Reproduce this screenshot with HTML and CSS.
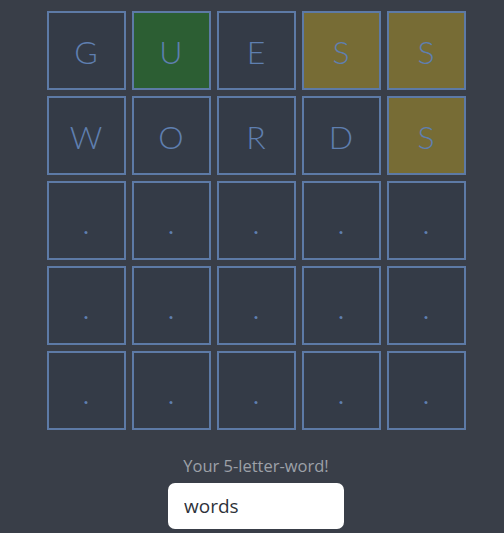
FILE: index.html
```html
<!DOCTYPE html>
<html>
<head>
<meta charset="utf-8">
<link rel="stylesheet" href="styles.css">
</head>
<body>
<main class="game">
  <div class="board">
    <div class="tile">G</div>
    <div class="tile correct">U</div>
    <div class="tile">E</div>
    <div class="tile present">S</div>
    <div class="tile present">S</div>

    <div class="tile">W</div>
    <div class="tile">O</div>
    <div class="tile">R</div>
    <div class="tile">D</div>
    <div class="tile present">S</div>

    <div class="tile">.</div><div class="tile">.</div><div class="tile">.</div><div class="tile">.</div><div class="tile">.</div>
    <div class="tile">.</div><div class="tile">.</div><div class="tile">.</div><div class="tile">.</div><div class="tile">.</div>
    <div class="tile">.</div><div class="tile">.</div><div class="tile">.</div><div class="tile">.</div><div class="tile">.</div>
  </div>
  <label class="prompt" for="guess">Your 5-letter-word!</label>
  <input class="guess" id="guess" type="text" value="words">
</main>
</body>
</html>
```
FILE: styles.css
```css
html, body {
  margin: 0;
  padding: 0;
}
body {
  background: #393e48;
  font-family: "Open Sans", "Noto Sans", sans-serif;
  width: 504px;
  height: 533px;
  overflow: hidden;
}
.game {
  display: flex;
  flex-direction: column;
  align-items: center;
  padding: 11px 0 0 8px;
}
.board {
  display: grid;
  grid-template-columns: repeat(5, 79px);
  grid-auto-rows: 79px;
  gap: 6px;
}
.tile {
  box-sizing: border-box;
  border: 2px solid #5d7aa6;
  background: #343b47;
  color: #5f7fb0;
  display: flex;
  align-items: center;
  justify-content: center;
  font-family: "Lato", "Open Sans", sans-serif;
  font-weight: 300;
  font-size: 32px;
  padding-top: 1px;
}
.tile.correct {
  background: #2c5e33;
}
.tile.present {
  background: #776c35;
}
.prompt {
  margin-top: 26px;
  color: #9da1a8;
  font-size: 16.5px;
  line-height: 20px;
}
.guess {
  margin-top: 7px;
  box-sizing: border-box;
  width: 176px;
  height: 46px;
  border: none;
  border-radius: 7px;
  background: #ffffff;
  color: #2e323a;
  font-family: "Open Sans", sans-serif;
  font-size: 19px;
  padding: 0 0 0 16px;
  outline: none;
}
```
